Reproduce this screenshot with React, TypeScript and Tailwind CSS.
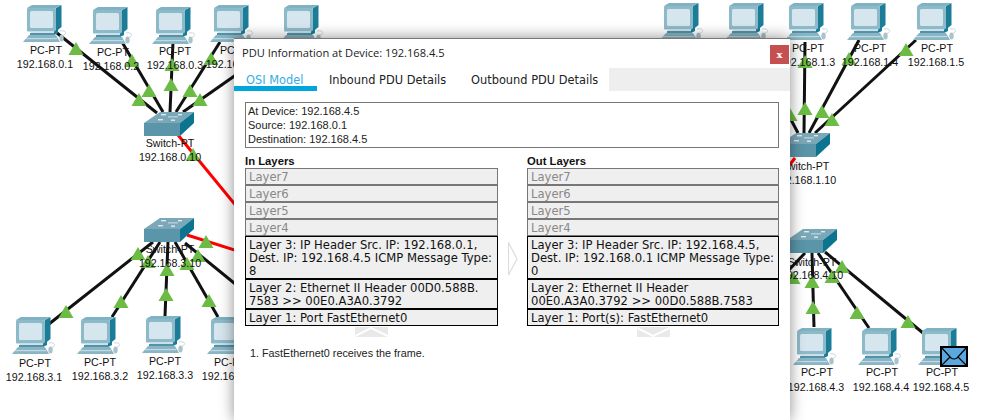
import React from 'react';

const sans = 'font-["Liberation_Sans",Arial,sans-serif]';
const verdana = 'font-["DejaVu_Sans",Verdana,sans-serif]';

type Node = { x: number; y: number };
type Label = { x: number; y: number; text: string };

const pcs: Node[] = [
  { x: 23, y: 5 }, { x: 89, y: 7 }, { x: 152, y: 7 }, { x: 210, y: 5 }, { x: 280, y: 5 },
  { x: 660, y: 3 }, { x: 725, y: 3 }, { x: 785, y: 3 }, { x: 847, y: 3 }, { x: 913, y: 3 },
  { x: 12, y: 317 }, { x: 77, y: 317 }, { x: 142, y: 316 }, { x: 207, y: 317 },
  { x: 793, y: 328 }, { x: 858, y: 328 }, { x: 918, y: 328 },
];

const switches: Node[] = [
  { x: 144, y: 112 }, { x: 144, y: 218 }, { x: 780, y: 133 }, { x: 787, y: 229 },
];

const labels: Label[] = [
  { x: 46, y: 50, text: 'PC-PT' }, { x: 45, y: 64, text: '192.168.0.1' },
  { x: 113, y: 52, text: 'PC-PT' }, { x: 111, y: 66, text: '192.168.0.2' },
  { x: 175, y: 51, text: 'PC-PT' }, { x: 175, y: 65, text: '192.168.0.3' },
  { x: 236, y: 50, text: 'PC-PT' }, { x: 234, y: 64, text: '192.168.0.4' },
  { x: 170, y: 143, text: 'Switch-PT' }, { x: 170, y: 157, text: '192.168.0.10' },
  { x: 170, y: 249, text: 'Switch-PT' }, { x: 170, y: 263, text: '192.168.3.10' },
  { x: 35, y: 363, text: 'PC-PT' }, { x: 34, y: 377, text: '192.168.3.1' },
  { x: 100, y: 362, text: 'PC-PT' }, { x: 100, y: 376, text: '192.168.3.2' },
  { x: 165, y: 361, text: 'PC-PT' }, { x: 165, y: 375, text: '192.168.3.3' },
  { x: 230, y: 362, text: 'PC-PT' }, { x: 230, y: 376, text: '192.168.3.4' },
  { x: 808, y: 48, text: 'PC-PT' }, { x: 807, y: 62, text: '192.168.1.3' },
  { x: 870, y: 48, text: 'PC-PT' }, { x: 870, y: 62, text: '192.168.1.4' },
  { x: 937, y: 48, text: 'PC-PT' }, { x: 936, y: 62, text: '192.168.1.5' },
  { x: 805, y: 166, text: 'Switch-PT' }, { x: 805, y: 180, text: '192.168.1.10' },
  { x: 812, y: 262, text: 'Switch-PT' }, { x: 812, y: 275, text: '192.168.4.10' },
  { x: 817, y: 372, text: 'PC-PT' }, { x: 816, y: 387, text: '192.168.4.3' },
  { x: 882, y: 372, text: 'PC-PT' }, { x: 881, y: 387, text: '192.168.4.4' },
  { x: 942, y: 372, text: 'PC-PT' }, { x: 941, y: 387, text: '192.168.4.5' },
];

// black links: x1 y1 x2 y2
const links = [
  [57, 33, 157, 113], [122, 42, 163, 112], [173, 42, 170, 112], [220, 42, 176, 112], [260, 58, 183, 112],
  [153, 242, 49, 324], [160, 242, 112, 317], [168, 242, 165, 316], [175, 242, 218, 317], [185, 243, 250, 296],
  [805, 42, 804, 133], [859, 40, 809, 133], [916, 40, 815, 133], [770, 80, 798, 133],
  [812, 253, 814, 327], [818, 253, 869, 328], [825, 252, 923, 333], [770, 290, 805, 253],
];

const redLinks = [
  [178, 135, 260, 235], [187, 235, 260, 258], [795, 158, 770, 190],
];

// green triangles: centre x, top y
const triangles = [
  [76, 42], [132, 54], [172, 58], [211, 52], [193, 148],
  [139, 93], [149, 84], [171, 78], [190, 84], [200, 93],
  [206, 235], [198, 249], [138, 247], [148, 255], [167, 263], [187, 257],
  [66, 305], [121, 295], [166, 288], [209, 294],
  [805, 55], [849, 52], [906, 43], [805, 102], [822, 105], [832, 113], [790, 108],
  [812, 275], [813, 301], [832, 270], [842, 260], [857, 306], [908, 315], [793, 271],
];

const PcIcon = ({ x, y }: Node) => (
  <svg className="absolute" style={{ left: x, top: y }} width="46" height="38" viewBox="0 0 46 38">
    <polygon points="33,3 38.5,0 38.5,22 33,26.5" fill="#1c7d99" />
    <polygon points="4,3 9,0 38.5,0 33,3" fill="#7fb2c3" />
    <rect x="4" y="3" width="29" height="23.5" rx="1" fill="#8dbac9" />
    <rect x="7" y="6" width="23" height="17" rx="1.5" fill="#d6e6ee" />
    <rect x="8" y="26.5" width="23" height="3" fill="#cfe0e6" />
    <polygon points="31,26.5 35,24 35,28 31,30" fill="#1c7d99" />
    <rect x="7" y="28" width="24" height="2" fill="#4f94aa" />
    <polygon points="6,30 33,30 37,37 0,37" fill="#8ab5c4" />
    <rect x="3" y="33" width="31" height="1.2" fill="#c4dbe3" />
    <path d="M37 26 C41 25 44 27 42 29 L38 32" fill="none" stroke="#c9d9de" strokeWidth="1" />
    <ellipse cx="38.5" cy="33" rx="2.2" ry="3.5" fill="#a9c3cc" />
  </svg>
);

const SwitchIcon = ({ x, y }: Node) => (
  <svg className="absolute" style={{ left: x, top: y }} width="50" height="24" viewBox="0 0 50 24">
    <polygon points="0,11 16,0 50,0 36,11" fill="#7ba8b8" />
    <rect x="0" y="11" width="36" height="13" fill="#5b95aa" />
    <polygon points="36,11 50,0 50,11 36,24" fill="#0d7490" />
    <g fill="#dfeaee">
      <rect x="14" y="7" width="5" height="1.4" />
      <rect x="27" y="7.5" width="4" height="1.4" />
      <rect x="17" y="2" width="5" height="1.4" />
      <rect x="34" y="2" width="4" height="1.4" />
      <rect x="24" y="4.5" width="10" height="0.8" />
    </g>
  </svg>
);

const Layer = ({ text, on, h }: { text: string; on?: boolean; h: string }) => (
  <div
    className={`${h} border bg-[#efefef] pt-[2px] pl-[3px] text-[11.6px] leading-[13px] ${
      on ? 'border-black text-[#111]' : 'border-[#777] text-[#888]'
    }`}
  >
    {text}
  </div>
);

const LayerColumn = ({ title, lines }: { title: string; lines: string[] }) => (
  <div className="flex flex-col">
    <div className={`${sans} text-[11.3px] leading-[13px] font-bold text-[#111]`}>{title}</div>
    <div className={`${verdana} flex flex-col`}>
      <Layer text="Layer7" h="h-[17px]" />
      <Layer text="Layer6" h="h-[17px]" />
      <Layer text="Layer5" h="h-[17px]" />
      <Layer text="Layer4" h="h-[17px]" />
      <Layer text={lines[0]} on h="h-[43px]" />
      <Layer text={lines[1]} on h="h-[30px]" />
      <Layer text={lines[2]} on h="h-[17px]" />
    </div>
  </div>
);

export default function App() {
  return (
    <div className={`${sans} relative h-[420px] w-[991px] overflow-hidden bg-white`}>
      <svg className="absolute inset-0" width="991" height="420">
        {links.map((l, i) => (
          <line key={i} x1={l[0]} y1={l[1]} x2={l[2]} y2={l[3]} stroke="#111" strokeWidth="3" />
        ))}
        {redLinks.map((l, i) => (
          <line key={i} x1={l[0]} y1={l[1]} x2={l[2]} y2={l[3]} stroke="#f00" strokeWidth="3" />
        ))}
      </svg>

      {pcs.map((p, i) => <PcIcon key={i} {...p} />)}
      {switches.map((s, i) => <SwitchIcon key={i} {...s} />)}

      <svg className="absolute inset-0" width="991" height="420">
        {triangles.map((t, i) => (
          <polygon key={i} points={`${t[0]},${t[1]} ${t[0] + 7.5},${t[1] + 13} ${t[0] - 7.5},${t[1] + 13}`} fill="#6cbb45" />
        ))}
      </svg>

      {labels.map((l, i) => (
        <div
          key={i}
          className="absolute -translate-x-1/2 -translate-y-1/2 text-[10.67px] leading-[14px] whitespace-nowrap text-[#111]"
          style={{ left: l.x, top: l.y }}
        >
          {l.text}
        </div>
      ))}

      {/* envelope on the destination pc */}
      <svg className="absolute left-[940px] top-[346px]" width="28" height="21" viewBox="0 0 28 21">
        <rect x="1" y="1" width="26" height="19" fill="#59a9e0" stroke="#000" strokeWidth="2" />
        <path d="M1 1 L11 12 Q14 14 17 12 L27 1 M1 20 L10 11 M27 20 L18 11" fill="none" stroke="#000" strokeWidth="1.2" />
      </svg>

      {/* dialog */}
      <div className="absolute left-[234px] top-[38px] flex h-[382px] w-[556px] flex-col border-t border-[#777] bg-white shadow-[0_0_14px_rgba(0,0,0,0.45)]">
        <div className="flex h-[29px] items-start justify-between">
          <div className="pt-[6px] pl-[8px] font-['Open_Sans',sans-serif] text-[11.1px] leading-[16px] text-[#222]">
            PDU Information at Device: 192.168.4.5
          </div>
          <div className="mt-[6px] mr-[1px] flex h-[19px] w-[19px] items-center justify-center bg-[#c45050] font-['DejaVu_Serif',serif] text-[10px] leading-none font-bold text-white">
            x
          </div>
        </div>

        <div className={`${verdana} flex h-[23px] text-[11.4px] leading-[24px] text-[#222]`}>
          <div className="h-full w-[83px] border-b-[5px] border-[#00a5dc] pl-[12px] text-[#35aee6]">OSI Model</div>
          <div className="w-[142px] pl-[12px]">Inbound PDU Details</div>
          <div className="w-[150px] pl-[12px]">Outbound PDU Details</div>
          <div className="flex-1 bg-[#eee]" />
        </div>

        <div className="mt-[11px] ml-[11px] flex h-[46px] w-[534px] flex-col border border-[#777] pt-[1px] pl-[2px] text-[11px] leading-[14px] text-[#222]">
          <div>At Device: 192.168.4.5</div>
          <div>Source: 192.168.0.1</div>
          <div>Destination: 192.168.4.5</div>
        </div>

        <div className="mt-[7px] ml-[11px] grid w-[534px] grid-cols-[253px_252px] gap-x-[29px]">
          <LayerColumn
            title="In Layers"
            lines={[
              'Layer 3: IP Header Src. IP: 192.168.0.1, Dest. IP: 192.168.4.5 ICMP Message Type: 8',
              'Layer 2: Ethernet II Header 00D0.588B. 7583 >> 00E0.A3A0.3792',
              'Layer 1: Port FastEthernet0',
            ]}
          />
          <LayerColumn
            title="Out Layers"
            lines={[
              'Layer 3: IP Header Src. IP: 192.168.4.5, Dest. IP: 192.168.0.1 ICMP Message Type: 0',
              'Layer 2: Ethernet II Header 00E0.A3A0.3792 >> 00D0.588B.7583',
              'Layer 1: Port(s): FastEthernet0',
            ]}
          />
        </div>

        <div className="mt-[20px] ml-[16px] text-[10.8px] leading-[14px] text-[#222]">1. FastEthernet0 receives the frame.</div>

        {/* arrows between the stacks */}
        <svg className="absolute left-[274px] top-[203px]" width="10" height="34" viewBox="0 0 10 34">
          <polygon points="0.5,0.5 9,17 0.5,33" fill="#fff" stroke="#dcdcdc" strokeWidth="1.2" />
        </svg>
        <svg className="absolute left-[121px] top-[288px]" width="33" height="10" viewBox="0 0 33 10">
          <rect width="33" height="10" fill="#e9e9e9" />
          <path d="M0 9 L16 1 L33 9" fill="none" stroke="#fff" strokeWidth="2" />
        </svg>
        <svg className="absolute left-[403px] top-[288px]" width="33" height="10" viewBox="0 0 33 10">
          <rect width="33" height="10" fill="#e9e9e9" />
          <path d="M0 1 L16 9 L33 1" fill="none" stroke="#fff" strokeWidth="2" />
        </svg>
      </div>
    </div>
  );
}
